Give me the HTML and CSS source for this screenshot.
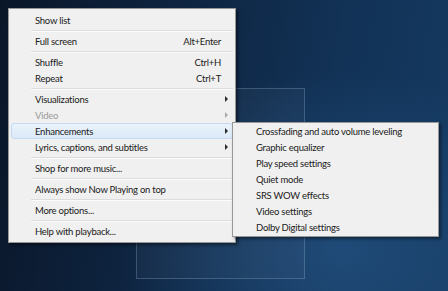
FILE: index.html
```html
<!DOCTYPE html>
<html lang="en">
<head>
  <meta charset="utf-8">
  <title>Now Playing - Context Menu</title>
  <link rel="stylesheet" href="styles.css">
</head>
<body>
  <div class="desktop">
    <div class="video-frame"></div>

    <ul class="menu main-menu">
      <li class="item">Show list</li>
      <li class="sep"></li>
      <li class="item">Full screen<span class="key">Alt+Enter</span></li>
      <li class="sep"></li>
      <li class="item">Shuffle<span class="key">Ctrl+H</span></li>
      <li class="item">Repeat<span class="key">Ctrl+T</span></li>
      <li class="sep"></li>
      <li class="item has-sub">Visualizations<span class="arrow"></span></li>
      <li class="item has-sub disabled">Video<span class="arrow"></span></li>
      <li class="item has-sub active">Enhancements<span class="arrow"></span></li>
      <li class="item has-sub">Lyrics, captions, and subtitles<span class="arrow"></span></li>
      <li class="sep"></li>
      <li class="item">Shop for more music...</li>
      <li class="sep"></li>
      <li class="item">Always show Now Playing on top</li>
      <li class="sep"></li>
      <li class="item">More options...</li>
      <li class="sep"></li>
      <li class="item">Help with playback...</li>
    </ul>

    <ul class="menu sub-menu">
      <li class="item">Crossfading and auto volume leveling</li>
      <li class="item">Graphic equalizer</li>
      <li class="item">Play speed settings</li>
      <li class="item">Quiet mode</li>
      <li class="item">SRS WOW effects</li>
      <li class="item">Video settings</li>
      <li class="item">Dolby Digital settings</li>
    </ul>
  </div>
</body>
</html>
```

FILE: styles.css
```css
body {
  margin: 0;
  font-family: Lato, 'Open Sans', sans-serif;
  font-size: 9.5px;
  letter-spacing: -0.25px;
  color: #1a1a1a;
}

.desktop {
  position: relative;
  width: 448px;
  height: 291px;
  overflow: hidden;
  background:
    radial-gradient(ellipse 220px 180px at 340px 250px, rgba(36, 82, 130, 0.75), rgba(36, 82, 130, 0) 100%),
    linear-gradient(100deg, #0a1628 0%, #0e2440 35%, #123256 70%, #153a62 100%);
}

.video-frame {
  position: absolute;
  left: 136px;
  top: 88px;
  width: 167px;
  height: 189px;
  border: 1px solid rgba(150, 180, 210, 0.3);
  background: rgba(255, 255, 255, 0.03);
}

.menu {
  position: absolute;
  list-style: none;
  margin: 0;
  background: #f0f0f0;
  border: 1px solid #979797;
  box-shadow: 2px 2px 3px rgba(0, 0, 0, 0.45);
}

.main-menu {
  left: 8px;
  top: 8px;
  width: 222px;
  padding: 3px 2px;
}

.sub-menu {
  left: 232px;
  top: 122px;
  width: 201px;
  padding: 0 2px 1px;
}

.item {
  display: flex;
  align-items: center;
  height: 16px;
  padding-left: 23px;
  white-space: nowrap;
  box-sizing: border-box;
  border: 1px solid transparent;
  border-radius: 3px;
}

.sub-menu .item {
  padding-left: 20px;
}

.item.active {
  background: linear-gradient(#eaf2fc, #dce9f8);
  border-color: #c4daf3;
}

.item.disabled {
  color: #9a9a9a;
}

.key {
  margin-left: auto;
  margin-right: 11px;
}

.arrow {
  margin-left: auto;
  width: 11px;
  height: 16px;
  display: flex;
  align-items: center;
}

.arrow::before {
  content: '';
  border-left: 3px solid #2a2a2a;
  border-top: 3px solid transparent;
  border-bottom: 3px solid transparent;
  margin-left: 4px;
}

.disabled .arrow::before {
  border-left-color: #a8a8a8;
}

.sep {
  height: 0;
  margin: 2px 0 1px 20px;
  border-top: 1px solid #dcdcdc;
  border-bottom: 1px solid #fbfbfb;
}
```
